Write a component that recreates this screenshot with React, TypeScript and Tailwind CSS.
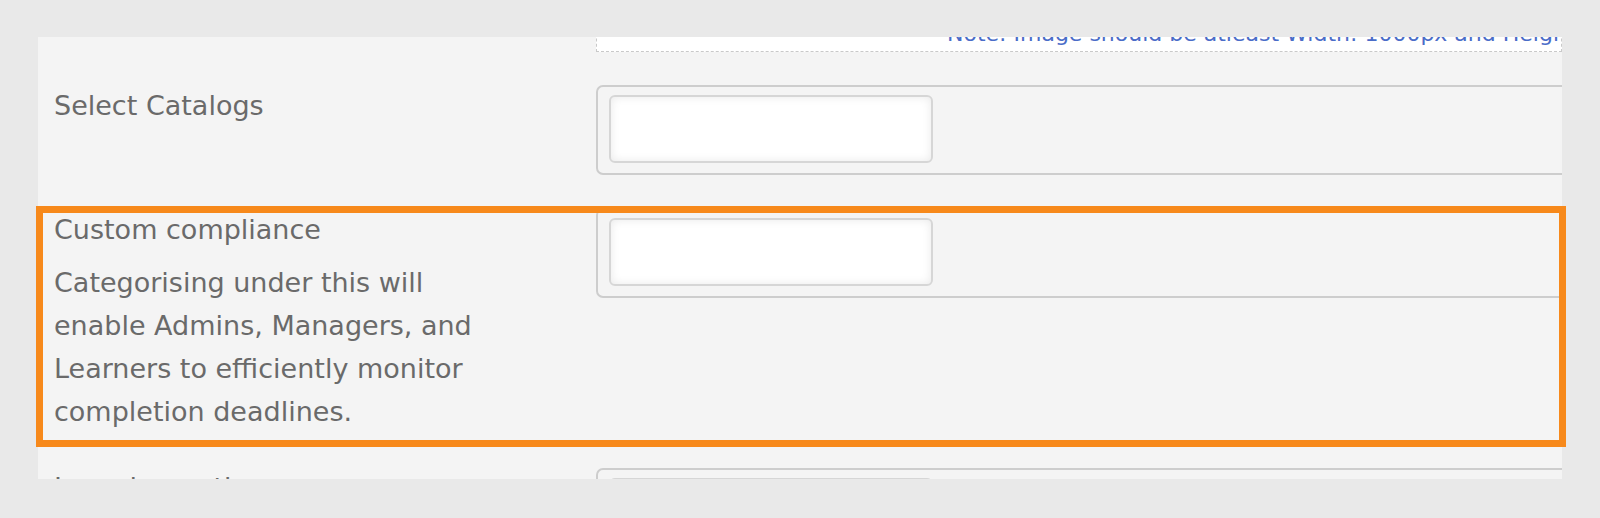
const labelFont = { fontFamily: '"DejaVu Sans", "Liberation Sans", sans-serif' };

function Fieldset() {
  return (
    <div className="w-[1100px] shrink-0 rounded-[7px] border-2 border-[#cdcdcd] bg-[#f4f4f4] pt-2 pr-2 pb-[10px] pl-[11px]">
      <div className="h-[68px] w-[324px] rounded-[6px] border-2 border-[#d6d6d6] bg-white shadow-[inset_0_0_10px_rgba(0,0,0,0.09)]" />
    </div>
  );
}

export default function App() {
  return (
    <div
      className="relative h-[518px] w-full overflow-hidden bg-[#e9e9e9] pl-[38px] pt-[37px] text-[#6a6a6a]"
      style={labelFont}
    >
      <div className="h-[442px] w-[1524px] overflow-hidden bg-[#f4f4f4]">
        {/* image note box, scrolled mostly out of view */}
        <div className="-mt-[30px] ml-[558px] flex h-[45px] items-end border border-dashed border-[#c9c9c9] bg-white pb-[6px] pl-[350px]">
          <span className="whitespace-nowrap text-[22px] leading-none text-[#4a6cc8]">
            Note: Image should be atleast Width: 1000px and Height: 400px
          </span>
        </div>

        {/* Select Catalogs */}
        <div className="mt-[33px] flex items-start">
          <div className="-mt-px w-[558px] shrink-0 pl-4 text-[27px] leading-[43px]">
            Select Catalogs
          </div>
          <Fieldset />
        </div>

        {/* Custom compliance */}
        <div className="mt-[33px] flex items-start">
          <div className="w-[558px] shrink-0 pl-4 text-[27px] leading-[43px]">
            <div>Custom compliance</div>
            <div className="mt-[10px]">
              <span className="block">Categorising under this will</span>
              <span className="block">enable Admins, Managers, and</span>
              <span className="block">Learners to efficiently monitor</span>
              <span className="block">completion deadlines.</span>
            </div>
          </div>
          <Fieldset />
        </div>

        {/* Learning path (cut off by the panel) */}
        <div className="mt-[35px] flex items-start">
          <div className="-mt-[2px] w-[558px] shrink-0 pl-4 text-[27px] leading-[43px]">
            Learning path
          </div>
          <Fieldset />
        </div>
      </div>

      {/* highlight annotation */}
      <div className="pointer-events-none absolute left-[36px] top-[206px] h-[241px] w-[1530px] border-[7px] border-[#f7891b]" />
    </div>
  );
}
